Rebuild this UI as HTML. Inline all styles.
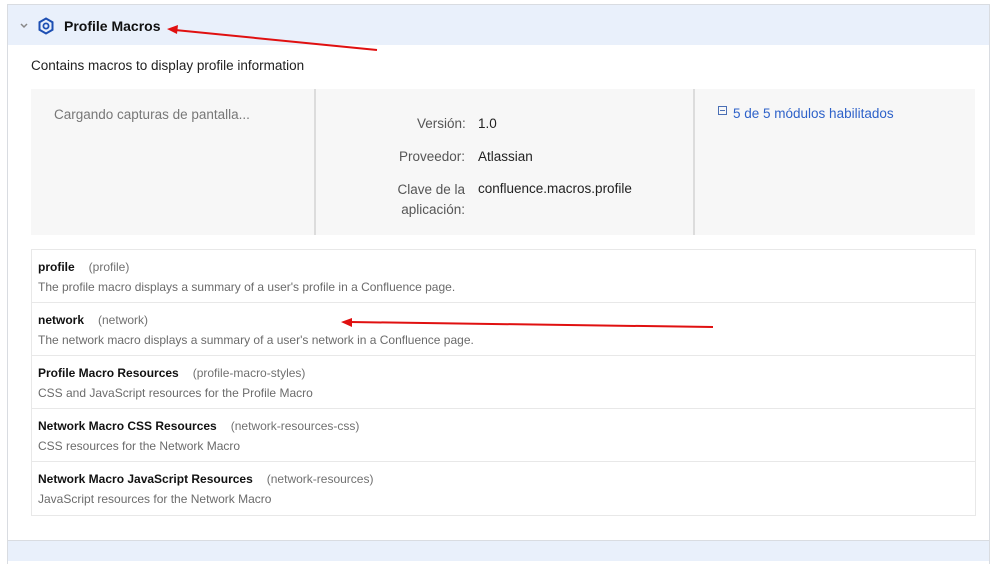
<!DOCTYPE html>
<html><head><meta charset="utf-8"><style>
*{margin:0;padding:0;box-sizing:border-box}
body{width:999px;height:561px;background:#fff;font-family:"Liberation Sans",sans-serif;position:relative;overflow:hidden;color:#172b4d}
.outer{position:absolute;left:7px;top:4px;width:983px;height:560px;border:1px solid #d9dce1;border-bottom:none}
.hdr{position:absolute;left:8px;top:5px;width:981px;height:40px;background:#e9f0fb}
.abs{position:absolute;white-space:nowrap}
.panel{position:absolute;left:31px;top:89px;width:944px;height:146px;background:#f7f7f7}
.div{position:absolute;top:89px;width:2px;height:146px;background:#dcdcdc}
.list{position:absolute;left:31px;top:249px;width:945px;height:267px;border:1px solid #e8e8e8}
.row{height:53px;border-bottom:1px solid #e8e8e8;padding:10px 0 0 6px;font-size:12px}
.row:last-child{border-bottom:none}
.row b{color:#111;font-size:12px}
.row .k{color:#707070;margin-left:14px}
.row .d{color:#6b6b6b;margin-top:6px}
.bot{position:absolute;left:8px;top:540px;width:981px;height:21px;background:#e9f0fb;border-top:1px solid #d9dce1}
</style></head><body>
<div class="outer"></div>
<div class="hdr"></div>
<svg class="abs" style="left:19px;top:22px" width="10" height="8"><path d="M2 2 L5 5 L8 2" stroke="#888" stroke-width="1.5" fill="none"/></svg>
<svg class="abs" style="left:37px;top:17px" width="18" height="18" viewBox="0 0 18 18"><path d="M9 1.5 L15.5 5.25 V12.75 L9 16.5 L2.5 12.75 V5.25 Z" fill="none" stroke="#1d4fb3" stroke-width="2"/><circle cx="9" cy="9" r="2.6" fill="none" stroke="#1d4fb3" stroke-width="1.8"/></svg>
<div class="abs" style="left:64px;top:18px;font-size:14px;font-weight:bold;color:#111">Profile Macros</div>
<svg class="abs" style="left:0;top:0" width="999" height="561"><line x1="377" y1="50" x2="175" y2="30" stroke="#e01010" stroke-width="2"/><path d="M167 29 L178 25 L177 34 Z" fill="#e01010"/><line x1="713" y1="327" x2="350" y2="322" stroke="#e01010" stroke-width="2"/><path d="M341 322 L352 318 L352 327 Z" fill="#e01010"/></svg>
<div class="abs" style="left:31px;top:58px;font-size:13.5px;color:#222">Contains macros to display profile information</div>
<div class="panel"></div>
<div class="div" style="left:314px"></div>
<div class="div" style="left:693px"></div>
<div class="abs" style="left:54px;top:107px;font-size:13.5px;color:#777">Cargando capturas de pantalla...</div>
<div class="abs" style="left:417px;top:116px;font-size:13.5px;color:#555">Versión:</div>
<div class="abs" style="left:478px;top:116px;font-size:13.5px;color:#222">1.0</div>
<div class="abs" style="left:399px;top:149px;font-size:13.5px;color:#555">Proveedor:</div>
<div class="abs" style="left:478px;top:149px;font-size:13.5px;color:#222">Atlassian</div>
<div class="abs" style="left:383px;top:180px;font-size:13.5px;color:#555;text-align:right;line-height:20px;width:82px;white-space:normal">Clave de la aplicación:</div>
<div class="abs" style="left:478px;top:181px;font-size:13.5px;color:#222">confluence.macros.profile</div>
<div class="abs" style="left:718px;top:106px;width:9px;height:9px;border:1px solid #4a6fb5"></div>
<div class="abs" style="left:720px;top:110px;width:5px;height:1px;background:#4a6fb5"></div>
<div class="abs" style="left:733px;top:106px;font-size:13.5px;color:#2e62c9">5 de 5 módulos habilitados</div>
<div class="list">
<div class="row"><b>profile</b><span class="k">(profile)</span><div class="d">The profile macro displays a summary of a user's profile in a Confluence page.</div></div>
<div class="row"><b>network</b><span class="k">(network)</span><div class="d">The network macro displays a summary of a user's network in a Confluence page.</div></div>
<div class="row"><b>Profile Macro Resources</b><span class="k">(profile-macro-styles)</span><div class="d">CSS and JavaScript resources for the Profile Macro</div></div>
<div class="row"><b>Network Macro CSS Resources</b><span class="k">(network-resources-css)</span><div class="d">CSS resources for the Network Macro</div></div>
<div class="row"><b>Network Macro JavaScript Resources</b><span class="k">(network-resources)</span><div class="d">JavaScript resources for the Network Macro</div></div>
</div>
<div class="bot"></div>
</body></html>
